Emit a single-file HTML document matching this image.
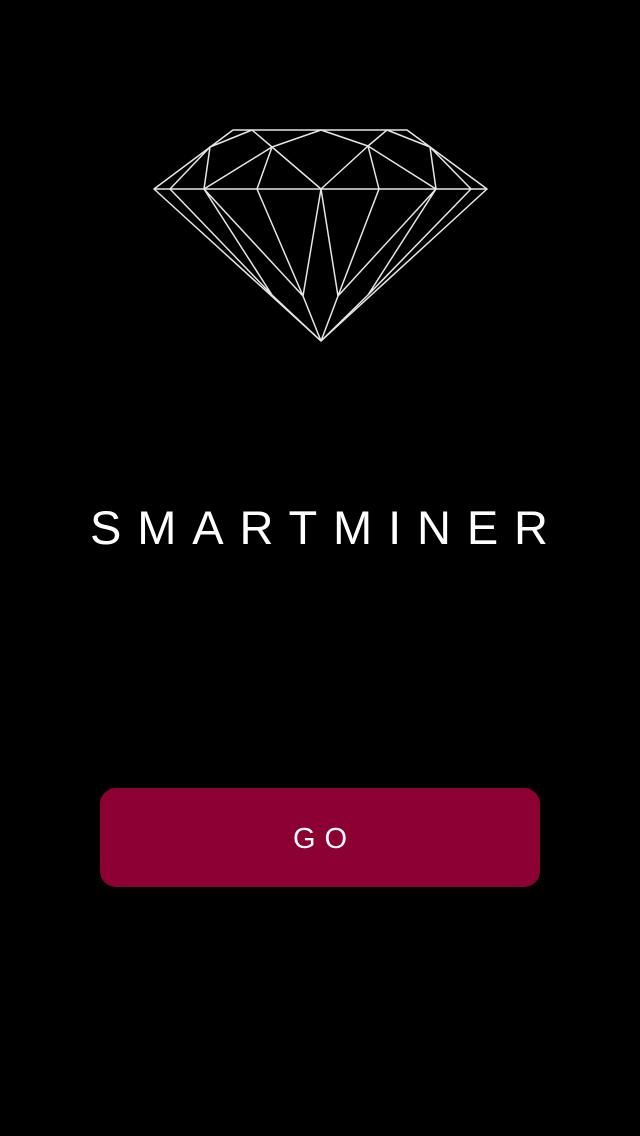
<!DOCTYPE html>
<html><head><meta charset="utf-8"><style>
html,body{margin:0;padding:0;background:#000;width:640px;height:1136px;overflow:hidden}
svg{position:absolute;left:0;top:0}
.btn{position:absolute;left:100px;top:788px;width:440px;height:99px;background:#8c0033;border-radius:16px}
</style></head><body>
<svg width="640" height="1136" viewBox="0 0 640 1136">
<g stroke="#e6e6e6" stroke-width="1.5" fill="none" stroke-linejoin="round">
<path d="M233 130 H407 L487 189 H154 Z"/>
<path d="M154 189 L321 341 L487 189"/>
<path d="M252 130 L210 147 L170 189 M210 147 L204 189 M252 130 L272 147 L321 189 M272 147 L321 130 L368 146 L321 189 M272 147 L257 189 M272 147 L204 189"/>
<path d="M387 130 L430 147 L471 189 M430 147 L436 189 M387 130 L368 146 L379 189 M368 146 L436 189"/>
<path d="M170 189 L272 295 L321 341 M204 189 L272 295 M204 189 L303 296 M257 189 L303 296 L321 189 M303 296 L321 341"/>
<path d="M471 189 L368 295 L321 341 M436 189 L368 295 M436 189 L338 296 M379 189 L338 296 L321 189 M338 296 L321 341"/>
</g>
<text x="90" y="544" font-family="Liberation Sans, sans-serif" font-size="47" fill="#fff" textLength="458" lengthAdjust="spacing">SMARTMINER</text>
</svg>
<div class="btn"></div>
<svg width="640" height="1136" viewBox="0 0 640 1136">
<text x="293" y="848" font-family="Liberation Sans, sans-serif" font-size="29" fill="#fff" textLength="54" lengthAdjust="spacing">GO</text>
</svg>
</body></html>
